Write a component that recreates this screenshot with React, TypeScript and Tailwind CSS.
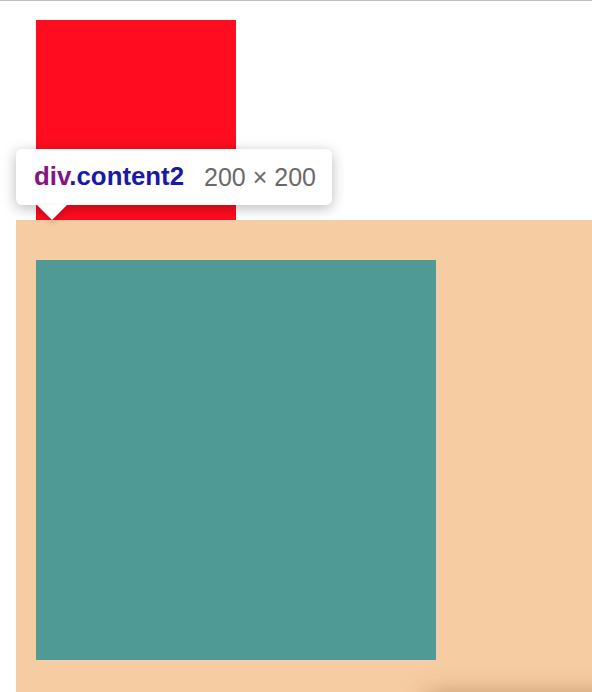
export default function App() {
  return (
    <div className="relative h-[692px] w-full overflow-hidden border-t border-[#bdbdbd] bg-white font-['Liberation_Sans',Arial,sans-serif]">
      {/* content1 */}
      <div className="ml-[36px] mt-[19px] h-[200px] w-[200px] bg-[#ff0c1e]" />

      {/* wrapper with content2 */}
      <div className="ml-[16px] h-[520px] bg-[#f6cca2] pl-[20px] pt-[40px]">
        <div className="h-[400px] w-[400px] bg-[#4f9a94]" />
      </div>

      {/* something just below the fold casting a shadow */}
      <div className="absolute left-[428px] top-[698px] h-[80px] w-[300px] bg-[#f6cca2] shadow-[0_-2px_26px_rgba(110,60,20,0.5)]" />

      {/* devtools inspect tooltip */}
      <div className="absolute left-[16px] top-[148px]">
        <div className="relative z-10 flex h-[56px] w-[316px] items-center rounded-[6px] bg-white pl-[18px] leading-none shadow-[0_3px_14px_rgba(0,0,0,0.28)]">
          <span className="text-[25.8px] font-bold">
            <span className="text-[#881280]">div</span>
            <span className="text-[#1a1aa6]">.content2</span>
          </span>
          <span className="ml-[20px] text-[25px] text-[#6a6a6a]">200 × 200</span>
        </div>
        <div className="absolute left-[21px] top-[56px] z-20 h-0 w-0 border-x-[15px] border-t-[15px] border-x-transparent border-t-white drop-shadow-[0_3px_3px_rgba(0,0,0,0.18)]" />
      </div>
    </div>
  );
}
